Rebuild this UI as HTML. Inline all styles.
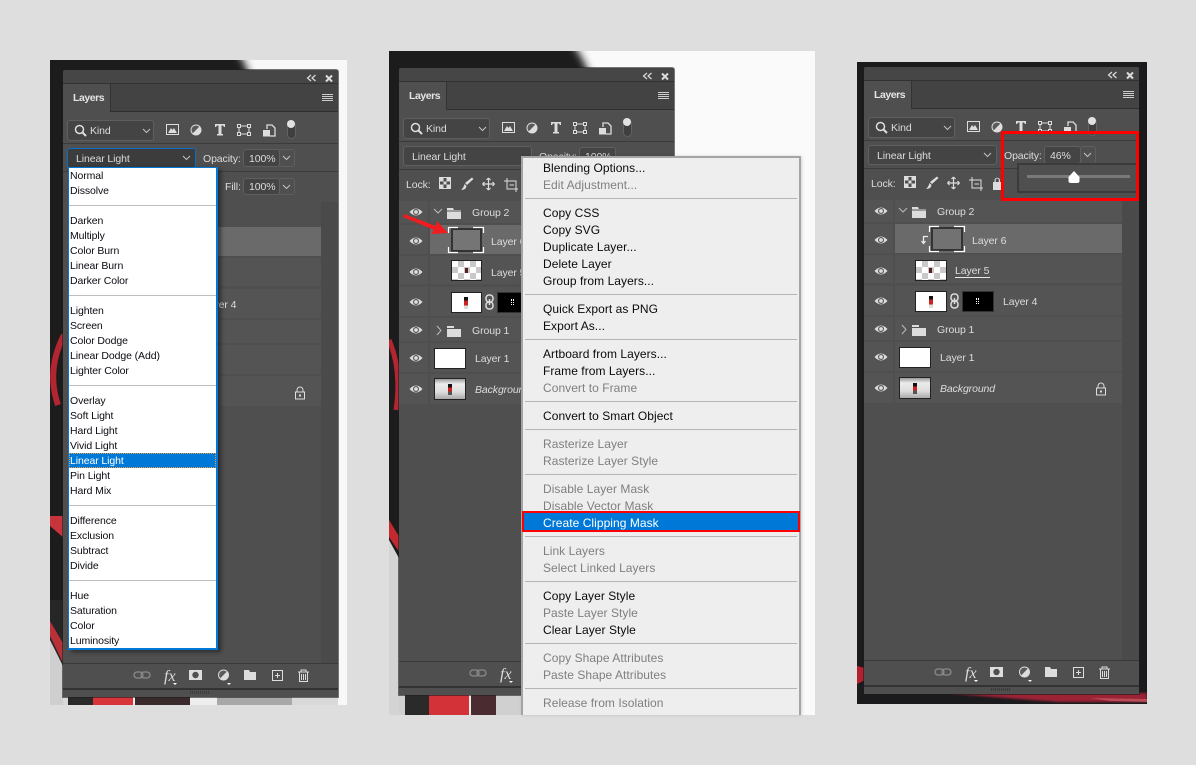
<!DOCTYPE html>
<html><head><meta charset="utf-8"><style>
html,body{margin:0;padding:0;width:1196px;height:765px;overflow:hidden;background:#dedede;font-family:"Liberation Sans",sans-serif}
.a,.t,.r,.s{position:absolute}
.p{position:absolute;width:275px;height:627px;background:#4f4f4f;border-radius:2px 2px 0 0;overflow:hidden;box-shadow:0 0 0 1px rgba(30,30,30,.6)}
.t{font-size:10.5px;line-height:14px;color:#dcdcdc;letter-spacing:-.1px;white-space:nowrap;margin-top:1px}
.r{left:31px;width:227px;background:#545454}
.e{position:absolute;left:0;width:29px;background:#545454}
.s{background:#444;border:1px solid #5f5f5f;box-sizing:border-box;border-radius:3px}
.m{position:absolute;left:2px;right:2px;height:1px;background:#b4b4b4}
.i{position:absolute;left:20px;font-size:12px;line-height:16px;letter-spacing:.05px;color:#0a0a0a;white-space:nowrap}
.g{color:#7f7f7f}
.d{position:absolute;left:1px;font-size:10.5px;line-height:14px;letter-spacing:-.1px;color:#0a0a12;white-space:nowrap}
.h{position:absolute;left:0;right:0;height:1px;background:#bdbdbd}
.l{font-weight:bold;color:#e4e4e4;letter-spacing:-.45px}
svg.a{overflow:visible}
</style></head><body>

<svg class="a" style="left:0;top:0" width="1196" height="765" viewBox="0 0 1196 765">
<defs><filter id="b"><feGaussianBlur stdDeviation="4"/></filter><filter id="b1"><feGaussianBlur stdDeviation="1"/></filter>
<clipPath id="c1"><rect x="50" y="60" width="297" height="645"/></clipPath>
<clipPath id="c2"><rect x="389" y="51" width="426" height="664"/></clipPath>
<clipPath id="c3"><rect x="857" y="62" width="290" height="642"/></clipPath>
<symbol id="eye" viewBox="0 0 14 10"><path d="M.5 5Q7-2 13.500 5Q7 12 .5 5Z" fill="#dcdcdc"/><circle cx="7" cy="5" r="3" fill="#545454"/><circle cx="7" cy="5" r="1.900" fill="#dcdcdc"/></symbol>
<symbol id="top" viewBox="0 0 30 10"><path d="M5 1L1.500 4 5 7M9.500 1L6 4 9.500 7" fill="none" stroke="#ddd" stroke-width="1.200"/><path d="M20 1.500L26 7.500M26 1.500L20 7.500" stroke="#ddd" stroke-width="2"/></symbol>
<symbol id="ham" viewBox="0 0 12 8"><path d="M0 .5H11M0 2.500H11M0 4.500H11M0 6.500H11" stroke="#ccc"/></symbol>
<symbol id="sr" viewBox="0 0 14 13"><circle cx="5.500" cy="5.500" r="4" fill="none" stroke="#ddd" stroke-width="1.500"/><path d="M8.500 8.500L12 12" stroke="#ddd" stroke-width="2"/></symbol>
<symbol id="ch" viewBox="0 0 10 6"><path d="M1 1L4.500 4.500 8 1" fill="none" stroke="#c4c4c4"/></symbol>
<symbol id="tools" viewBox="0 0 140 20"><path d="M3.500 4.500H15.500V14.500H3.500Z" fill="none" stroke="#ddd"/><path d="M5 13L8 8 9.500 10 11 8 14 13Z" fill="#ddd"/><circle cx="33" cy="10" r="5.500" fill="#ddd"/><path d="M29.800 13.200A4.500 4.500 0 0 1 36.200 6.800Z" fill="#5a5a5a"/><path d="M52 4H62V7H61L60 5.500H58.500V14H60V15.500H54V14H55.500V5.500H54L53 7H52Z" fill="#ddd"/><path d="M76 6H86V14H76Z" fill="none" stroke="#ddd"/><path d="M74.500 4.500h3v3h-3zM84.500 4.500h3v3h-3zM74.500 12.500h3v3h-3zM84.500 12.500h3v3h-3z" fill="#4f4f4f" stroke="#ddd"/><path d="M104 9V5H109L112 8V16H107" fill="none" stroke="#ddd" stroke-width="1.300"/><rect x="100" y="10" width="7" height="6.500" fill="#ddd"/></symbol>
<symbol id="locks" viewBox="0 0 110 20"><path d="M2.500 3.500H13.500V14.500H2.500Z" fill="#4f4f4f" stroke="#ddd"/><path d="M3 4h3.500v3.500H3zM9.500 4H13v3.500H9.500zM6.500 7.500h3v3h-3zM3 10.500h3.500V14H3zM9.500 10.500H13V14H9.500z" fill="#ddd"/><path d="M35 3.500L36.500 5 30 11 28 9ZM27.500 10L29.500 12Q29 16 24 16Q26.500 14 27.500 10Z" fill="#ddd"/><path d="M45.500 10H57.500M51.500 4V16M45.500 10l2-2M45.500 10l2 2M57.500 10l-2-2M57.500 10l-2 2M51.500 4l-2 2M51.500 4l2 2M51.500 16l-2-2M51.500 16l2-2" stroke="#ddd" stroke-width="1.200" fill="none"/><path d="M70 7H79V15H70Z" fill="none" stroke="#ddd"/><path d="M70 4V8M67 7H71M79 13V18M76 15H81M72.500 11H77" stroke="#ddd"/></symbol>
<symbol id="foot" viewBox="0 0 190 24"><g fill="none"><rect x="6" y="8" width="9" height="6" rx="3" stroke="#8a8a8a" stroke-width="1.300"/><rect x="13" y="8" width="9" height="6" rx="3" stroke="#8a8a8a" stroke-width="1.300"/></g><path d="M45 19h4l-2 2z" fill="#fff"/><rect x="61" y="6" width="13" height="10" fill="#ddd"/><circle cx="67.500" cy="11" r="3.200" fill="#4f4f4f"/><circle cx="95.500" cy="11" r="5.500" fill="#ddd"/><path d="M92.300 14.200A4.500 4.500 0 0 1 98.700 7.800Z" fill="#5a5a5a"/><path d="M99 19h4l-2 2z" fill="#fff"/><path d="M116 6H121L122 8H128V16H116Z" fill="#ddd"/><rect x="144.500" y="6.500" width="10" height="10" fill="none" stroke="#ddd"/><path d="M149.500 9V14M147 11.500H152" stroke="#ddd"/><path d="M170 8H181M173 8V6H178V8M171.500 8.500V17.500H179.500V8.500M173.500 10V16M175.500 10V16M177.500 10V16" fill="none" stroke="#ddd"/></symbol>
</defs>

<g clip-path="url(#c1)"><rect x="50" y="60" width="297" height="645" fill="#f8f8f8"/>
<path d="M40 50H236Q246 62 250 78V640H40Z" fill="#1c1c1c" filter="url(#b)"/>
<rect x="50" y="600" width="14" height="70" fill="#262626"/>
<path d="M64 335Q46 370 58 405" stroke="#b32530" stroke-width="6" fill="none"/>
<path d="M50 516H64V538L50 526Z" fill="#c8343c"/>
<path d="M50 621L64 645V665L50 636Z" fill="#b83038"/>
<path d="M50 640L64 668V705H50Z" fill="#cfcfcf"/>
<rect x="63" y="696" width="275" height="9" fill="#d9d9d9"/><rect x="68" y="696" width="25" height="9" fill="#2a2a2a"/>
<rect x="93" y="696" width="40" height="9" fill="#d8353a"/><rect x="133" y="696" width="2" height="9" fill="#eee"/>
<rect x="135" y="696" width="55" height="9" fill="#3a2a2c"/><rect x="190" y="696" width="27" height="9" fill="#eee"/>
<rect x="217" y="696" width="75" height="9" fill="#a8a8a8"/></g>

<g clip-path="url(#c2)"><rect x="389" y="51" width="426" height="664" fill="#fafafa"/>
<path d="M380 40H570Q582 55 590 75V660H380Z" fill="#1c1c1c" filter="url(#b)"/>
<path d="M389 340Q402 370 396 410" stroke="#b32530" stroke-width="5" fill="none"/>
<path d="M389 520L400 538V553L389 537Z" fill="#c22a30"/>
<path d="M389 540L400 560V715H389Z" fill="#d4d4d4"/>
<rect x="399" y="694" width="125" height="21" fill="#d0d0d0"/><rect x="405" y="694" width="24" height="21" fill="#2a2a2a"/>
<rect x="429" y="694" width="40" height="21" fill="#d33238"/><rect x="469" y="694" width="2" height="21" fill="#eee"/>
<rect x="471" y="694" width="25" height="21" fill="#4a2c30"/></g>

<g clip-path="url(#c3)"><rect x="857" y="62" width="290" height="642" fill="#1b1b1d"/>
<path d="M857 666L865 668V680L857 684Z" fill="#b5202f"/>
<path d="M945 693H1147V702H1060Q1000 698 945 693Z" fill="#9c2436" filter="url(#b1)"/></g>
<path d="M1090 698L1147 699V702L1110 701Z" fill="#c9606a" opacity=".7"/>
</svg>

<!-- ===== PANEL 1 ===== -->
<div class="p" style="left:63px;top:70px">
<div class="a" style="left:0;top:0;width:275px;height:13px;background:#464646"></div>
<div class="a" style="left:0;top:13px;width:275px;height:1px;background:#323232"></div>
<div class="a" style="left:0;top:14px;width:275px;height:27px;background:#434343;border-bottom:1px solid #2f2f2f"></div>
<div class="a" style="left:0;top:14px;width:48px;height:28px;background:#4f4f4f;border-right:1px solid #333;box-sizing:border-box"></div>
<div class="t l" style="left:10px;top:20px">Layers</div>
<svg class="a" style="left:243px;top:4px" width="30" height="10"><use href="#top"/></svg>
<svg class="a" style="left:259px;top:24px" width="12" height="8"><use href="#ham"/></svg>
<div class="a" style="left:0;top:73px;width:275px;height:1px;background:#3b3b3b"></div>
<div class="a" style="left:0;top:101px;width:275px;height:1px;background:#3b3b3b"></div>
<div class="s" style="left:4px;top:50px;width:87px;height:21px"></div>
<svg class="a" style="left:11px;top:54px" width="14" height="13"><use href="#sr"/></svg>
<div class="t" style="left:27px;top:53px">Kind</div>
<svg class="a" style="left:79px;top:58px" width="10" height="6"><use href="#ch"/></svg>
<svg class="a" style="left:100px;top:50px" width="140" height="20"><use href="#tools"/></svg>
<div class="a" style="left:224px;top:51px;width:9px;height:18px;border-radius:5px;background:#3f3f3f;border:1px solid #626262;box-sizing:border-box"></div>
<div class="a" style="left:224px;top:50px;width:8px;height:8px;border-radius:50%;background:#e2e2e2"></div>
<div class="s" style="left:4px;top:78px;width:129px;height:20px;background:#3c3c3c;border:1px solid #0c6fc6"></div>
<div class="t" style="left:13px;top:81px">Linear Light</div>
<svg class="a" style="left:119px;top:85px" width="10" height="6"><use href="#ch"/></svg>
<div class="t" style="left:140px;top:81px">Opacity:</div>
<div class="s" style="left:180px;top:79px;width:37px;height:18px"></div><div class="s" style="left:216px;top:79px;width:16px;height:18px;background:#4f4f4f"></div>
<div class="t" style="left:186px;top:81px">100%</div>
<svg class="a" style="left:219px;top:85px" width="10" height="6"><use href="#ch"/></svg>
<div class="t" style="left:162px;top:109px">Fill:</div>
<div class="s" style="left:180px;top:108px;width:37px;height:17px"></div><div class="s" style="left:216px;top:108px;width:16px;height:17px;background:#4f4f4f"></div>
<div class="t" style="left:186px;top:109px">100%</div>
<svg class="a" style="left:219px;top:114px" width="10" height="6"><use href="#ch"/></svg>
<div class="a" style="left:258px;top:132px;width:17px;height:461px;background:#4a4a4a"></div>
<div class="r" style="top:157px;height:29px;background:#6a6a6a"></div>
<div class="r" style="top:188px;height:28px"></div><div class="r" style="top:219px;height:29px"></div><div class="r" style="top:250px;height:23px"></div><div class="r" style="top:275px;height:29px"></div><div class="r" style="top:306px;height:30px"></div>
<div class="t" style="left:139px;top:227px">Layer 4</div>
<svg class="a" style="left:231px;top:316px" width="12" height="14"><path d="M3 6V4A3 3 0 0 1 9 4V6" fill="none" stroke="#ddd"/><rect x="1.500" y="6" width="9" height="7" fill="none" stroke="#ddd"/><rect x="5" y="8.500" width="2" height="2" fill="#ddd"/></svg>
<div class="a" style="left:0;top:593px;width:275px;height:1px;background:#3a3a3a"></div>
<div class="a" style="left:0;top:618px;width:275px;height:2px;background:#333"></div>
<div class="a" style="left:127px;top:621px;width:20px;height:3px;background:repeating-linear-gradient(90deg,#3c3c3c 0 1px,transparent 1px 2px)"></div>
<svg class="a" style="left:65px;top:594px" width="190" height="24"><use href="#foot"/><text x="36" y="17" font-family="Liberation Serif" font-style="italic" font-size="16" fill="#ddd">fx</text></svg>
</div>

<!-- dropdown -->
<div class="a" style="left:68px;top:167px;width:150px;height:483px;background:#fff;border:1px solid #0078d7;border-width:1px 2px 2px 1px;box-sizing:border-box;box-shadow:3px 2px 4px rgba(0,0,0,.45)">
<div class="d" style="top:1px">Normal</div><div class="d" style="top:16px">Dissolve</div><div class="h" style="top:37px"></div>
<div class="d" style="top:46px">Darken</div><div class="d" style="top:61px">Multiply</div><div class="d" style="top:76px">Color Burn</div><div class="d" style="top:91px">Linear Burn</div><div class="d" style="top:106px">Darker Color</div><div class="h" style="top:127px"></div>
<div class="d" style="top:136px">Lighten</div><div class="d" style="top:151px">Screen</div><div class="d" style="top:166px">Color Dodge</div><div class="d" style="top:181px">Linear Dodge (Add)</div><div class="d" style="top:196px">Lighter Color</div><div class="h" style="top:217px"></div>
<div class="d" style="top:226px">Overlay</div><div class="d" style="top:241px">Soft Light</div><div class="d" style="top:256px">Hard Light</div><div class="d" style="top:271px">Vivid Light</div>
<div class="a" style="left:0;right:0;top:285px;height:15px;background:#0078d7;outline:1px dotted #e8a040;outline-offset:-1px"></div><div class="d" style="top:286px;color:#fff">Linear Light</div>
<div class="d" style="top:301px">Pin Light</div><div class="d" style="top:316px">Hard Mix</div><div class="h" style="top:337px"></div>
<div class="d" style="top:346px">Difference</div><div class="d" style="top:361px">Exclusion</div><div class="d" style="top:376px">Subtract</div><div class="d" style="top:391px">Divide</div><div class="h" style="top:412px"></div>
<div class="d" style="top:421px">Hue</div><div class="d" style="top:436px">Saturation</div><div class="d" style="top:451px">Color</div><div class="d" style="top:466px">Luminosity</div>
</div>

<!-- ===== PANEL 2 ===== -->
<div class="p" style="left:399px;top:68px">
<div class="a" style="left:0;top:0;width:275px;height:13px;background:#464646"></div>
<div class="a" style="left:0;top:13px;width:275px;height:1px;background:#323232"></div>
<div class="a" style="left:0;top:14px;width:275px;height:27px;background:#434343;border-bottom:1px solid #2f2f2f"></div>
<div class="a" style="left:0;top:14px;width:48px;height:28px;background:#4f4f4f;border-right:1px solid #333;box-sizing:border-box"></div>
<div class="t l" style="left:10px;top:20px">Layers</div>
<svg class="a" style="left:243px;top:4px" width="30" height="10"><use href="#top"/></svg>
<svg class="a" style="left:259px;top:24px" width="12" height="8"><use href="#ham"/></svg>
<div class="a" style="left:0;top:73px;width:275px;height:1px;background:#3b3b3b"></div>
<div class="a" style="left:0;top:101px;width:275px;height:1px;background:#3b3b3b"></div>
<div class="s" style="left:4px;top:50px;width:87px;height:21px"></div>
<svg class="a" style="left:11px;top:54px" width="14" height="13"><use href="#sr"/></svg>
<div class="t" style="left:27px;top:53px">Kind</div>
<svg class="a" style="left:79px;top:58px" width="10" height="6"><use href="#ch"/></svg>
<svg class="a" style="left:100px;top:50px" width="140" height="20"><use href="#tools"/></svg>
<div class="a" style="left:224px;top:51px;width:9px;height:18px;border-radius:5px;background:#3f3f3f;border:1px solid #626262;box-sizing:border-box"></div>
<div class="a" style="left:224px;top:50px;width:8px;height:8px;border-radius:50%;background:#e2e2e2"></div>
<div class="s" style="left:4px;top:78px;width:129px;height:20px"></div>
<div class="t" style="left:13px;top:81px">Linear Light</div>
<div class="t" style="left:140px;top:81px">Opacity:</div>
<div class="s" style="left:180px;top:79px;width:37px;height:18px"></div>
<div class="t" style="left:186px;top:81px">100%</div>
<div class="t" style="left:7px;top:109px">Lock:</div>
<svg class="a" style="left:38px;top:106px" width="110" height="20"><use href="#locks"/></svg>
<div class="e" style="top:133px;height:22px"></div><div class="r" style="top:133px;height:22px"></div>
<div class="e" style="top:157px;height:29px"></div><div class="r" style="top:157px;height:29px;background:#6a6a6a"></div>
<div class="e" style="top:188px;height:28px"></div><div class="r" style="top:188px;height:28px"></div>
<div class="e" style="top:219px;height:29px"></div><div class="r" style="top:219px;height:29px"></div>
<div class="e" style="top:250px;height:23px"></div><div class="r" style="top:250px;height:23px"></div>
<div class="e" style="top:275px;height:29px"></div><div class="r" style="top:275px;height:29px"></div>
<div class="e" style="top:306px;height:30px"></div><div class="r" style="top:306px;height:30px"></div>
<svg class="a" style="left:10px;top:139px" width="14" height="10"><use href="#eye"/></svg><svg class="a" style="left:10px;top:168px" width="14" height="10"><use href="#eye"/></svg><svg class="a" style="left:10px;top:199px" width="14" height="10"><use href="#eye"/></svg><svg class="a" style="left:10px;top:229px" width="14" height="10"><use href="#eye"/></svg><svg class="a" style="left:10px;top:257px" width="14" height="10"><use href="#eye"/></svg><svg class="a" style="left:10px;top:285px" width="14" height="10"><use href="#eye"/></svg><svg class="a" style="left:10px;top:316px" width="14" height="10"><use href="#eye"/></svg>
<svg class="a" style="left:34px;top:137px" width="50" height="16"><path d="M1 4L5 8 9 4" fill="none" stroke="#bbb"/><path d="M14 3H20L21 5H28V14H14Z" fill="#dcdcdc"/><path d="M14 6H28" stroke="#545454"/></svg>
<div class="t" style="left:73px;top:137px">Group 2</div>
<div class="a" style="left:52px;top:160px;width:31px;height:24px;background:#757575;border:2px solid #333;box-sizing:border-box"></div>
<svg class="a" style="left:49px;top:159px" width="38" height="27"><path d="M.5 6V.5H10M25 .5H35.500V6M35.500 20V25.500H25M10 25.500H.5V20" fill="none" stroke="#fff" stroke-width="1.200"/></svg>
<div class="t" style="left:92px;top:166px">Layer 6</div>
<div class="a" style="left:52px;top:192px;width:31px;height:21px;border:1px solid #222;box-sizing:border-box;background:repeating-conic-gradient(#c9c9c9 0 25%,#fff 0 50%) 0 0/12px 12px"></div>
<div class="a" style="left:66px;top:200px;width:3px;height:5px;background:#5a2025"></div>
<div class="t" style="left:92px;top:197px">Layer 5</div>
<div class="a" style="left:52px;top:224px;width:31px;height:21px;background:#fff;border:1px solid #222;box-sizing:border-box"></div><div class="a" style="left:65px;top:229px;width:4px;height:12px;background:linear-gradient(#111 30%,#c22 30% 70%,#ddd 70%)"></div>
<svg class="a" style="left:85px;top:226px" width="11" height="16"><rect x="2" y="1" width="7" height="7" rx="3" fill="none" stroke="#ddd" stroke-width="1.500"/><rect x="2" y="8" width="7" height="7" rx="3" fill="none" stroke="#ddd" stroke-width="1.500"/><path d="M5.500 5V11" stroke="#ddd" stroke-width="1.500"/></svg>
<div class="a" style="left:98px;top:224px;width:32px;height:21px;background:#000;border:1px solid #333;box-sizing:border-box"></div><div class="a" style="left:112px;top:231px;width:3px;height:6px;border:1px dotted #fff;box-sizing:border-box"></div>
<svg class="a" style="left:34px;top:255px" width="50" height="16"><path d="M4 3L8 7.500 4 12" fill="none" stroke="#bbb"/><path d="M14 3H21V5H14ZM14 6H28V14H14Z" fill="#dcdcdc"/></svg>
<div class="t" style="left:73px;top:255px">Group 1</div>
<div class="a" style="left:35px;top:280px;width:32px;height:21px;background:#fff;border:1px solid #222;box-sizing:border-box"></div>
<div class="t" style="left:76px;top:283px">Layer 1</div>
<div class="a" style="left:35px;top:310px;width:32px;height:22px;background:linear-gradient(#999,#ececec 25%,#ddd 65%,#aaa);border:1px solid #222;box-sizing:border-box"></div><div class="a" style="left:49px;top:316px;width:4px;height:11px;background:linear-gradient(#111 30%,#c22 30% 70%,#555 70%)"></div>
<div class="t" style="left:76px;top:314px;font-style:italic">Background</div>
<div class="a" style="left:0;top:593px;width:275px;height:1px;background:#3a3a3a"></div>
<div class="a" style="left:0;top:618px;width:275px;height:2px;background:#333"></div>
<svg class="a" style="left:65px;top:594px" width="190" height="24"><use href="#foot"/><text x="36" y="17" font-family="Liberation Serif" font-style="italic" font-size="16" fill="#ddd">fx</text></svg>
</div>
<svg class="a" style="left:0;top:0" width="600" height="300"><path d="M404 214L436 226 437 221 448 233 431 234 434 230 403 217Z" fill="#f01c20"/></svg>

<!-- context menu -->
<div class="a" style="left:521px;top:156px;width:280px;height:559px;background:#eee;border:2px solid #a4a4a4;border-bottom:0;box-sizing:border-box;box-shadow:1px 0 3px rgba(0,0,0,.15)">
<div class="i" style="top:2px">Blending Options...</div><div class="i g" style="top:19px">Edit Adjustment...</div><div class="m" style="top:40px"></div>
<div class="i" style="top:47px">Copy CSS</div><div class="i" style="top:64px">Copy SVG</div><div class="i" style="top:81px">Duplicate Layer...</div><div class="i" style="top:98px">Delete Layer</div><div class="i" style="top:115px">Group from Layers...</div><div class="m" style="top:136px"></div>
<div class="i" style="top:143px">Quick Export as PNG</div><div class="i" style="top:160px">Export As...</div><div class="m" style="top:181px"></div>
<div class="i" style="top:188px">Artboard from Layers...</div><div class="i" style="top:205px">Frame from Layers...</div><div class="i g" style="top:222px">Convert to Frame</div><div class="m" style="top:243px"></div>
<div class="i" style="top:250px">Convert to Smart Object</div><div class="m" style="top:271px"></div>
<div class="i g" style="top:278px">Rasterize Layer</div><div class="i g" style="top:295px">Rasterize Layer Style</div><div class="m" style="top:316px"></div>
<div class="i g" style="top:323px">Disable Layer Mask</div><div class="i g" style="top:340px">Disable Vector Mask</div>
<div class="a" style="left:-1px;top:353px;width:278px;height:21px;background:#0078d7;border:2px solid #f00;box-sizing:border-box"></div><div class="i" style="top:357px;color:#fff">Create Clipping Mask</div>
<div class="m" style="top:378px"></div>
<div class="i g" style="top:385px">Link Layers</div><div class="i g" style="top:402px">Select Linked Layers</div><div class="m" style="top:423px"></div>
<div class="i" style="top:430px">Copy Layer Style</div><div class="i g" style="top:447px">Paste Layer Style</div><div class="i" style="top:464px">Clear Layer Style</div><div class="m" style="top:485px"></div>
<div class="i g" style="top:492px">Copy Shape Attributes</div><div class="i g" style="top:509px">Paste Shape Attributes</div><div class="m" style="top:530px"></div>
<div class="i g" style="top:537px">Release from Isolation</div>
</div>

<!-- ===== PANEL 3 ===== -->
<div class="p" style="left:864px;top:67px">
<div class="a" style="left:0;top:0;width:275px;height:13px;background:#464646"></div>
<div class="a" style="left:0;top:13px;width:275px;height:1px;background:#323232"></div>
<div class="a" style="left:0;top:14px;width:275px;height:27px;background:#434343;border-bottom:1px solid #2f2f2f"></div>
<div class="a" style="left:0;top:14px;width:48px;height:28px;background:#4f4f4f;border-right:1px solid #333;box-sizing:border-box"></div>
<div class="t l" style="left:10px;top:20px">Layers</div>
<svg class="a" style="left:243px;top:4px" width="30" height="10"><use href="#top"/></svg>
<svg class="a" style="left:259px;top:24px" width="12" height="8"><use href="#ham"/></svg>
<div class="a" style="left:0;top:73px;width:275px;height:1px;background:#3b3b3b"></div>
<div class="a" style="left:0;top:101px;width:275px;height:1px;background:#3b3b3b"></div>
<div class="s" style="left:4px;top:50px;width:87px;height:21px"></div>
<svg class="a" style="left:11px;top:54px" width="14" height="13"><use href="#sr"/></svg>
<div class="t" style="left:27px;top:53px">Kind</div>
<svg class="a" style="left:79px;top:58px" width="10" height="6"><use href="#ch"/></svg>
<svg class="a" style="left:100px;top:50px" width="140" height="20"><use href="#tools"/></svg>
<div class="a" style="left:224px;top:51px;width:9px;height:18px;border-radius:5px;background:#3f3f3f;border:1px solid #626262;box-sizing:border-box"></div>
<div class="a" style="left:224px;top:50px;width:8px;height:8px;border-radius:50%;background:#e2e2e2"></div>
<div class="s" style="left:4px;top:78px;width:129px;height:20px"></div>
<div class="t" style="left:13px;top:81px">Linear Light</div>
<svg class="a" style="left:119px;top:85px" width="10" height="6"><use href="#ch"/></svg>
<div class="t" style="left:140px;top:81px">Opacity:</div>
<div class="s" style="left:180px;top:79px;width:37px;height:18px"></div><div class="s" style="left:216px;top:79px;width:16px;height:18px;background:#4f4f4f"></div>
<div class="t" style="left:186px;top:81px">46%</div>
<svg class="a" style="left:219px;top:85px" width="10" height="6"><use href="#ch"/></svg>
<div class="t" style="left:7px;top:109px">Lock:</div>
<svg class="a" style="left:38px;top:106px" width="110" height="20"><use href="#locks"/><path d="M91 9H99.500V17H91ZM92.500 9V7A2.800 2.800 0 0 1 98 7V9H96.800V7A1.500 1.500 0 0 0 93.700 7V9Z" fill="#ddd"/></svg>
<div class="a" style="left:258px;top:132px;width:17px;height:461px;background:#4a4a4a"></div>
<div class="e" style="top:133px;height:22px"></div><div class="r" style="top:133px;height:22px"></div>
<div class="e" style="top:157px;height:29px"></div><div class="r" style="top:157px;height:29px;background:#6a6a6a"></div>
<div class="e" style="top:188px;height:28px"></div><div class="r" style="top:188px;height:28px"></div>
<div class="e" style="top:219px;height:29px"></div><div class="r" style="top:219px;height:29px"></div>
<div class="e" style="top:250px;height:23px"></div><div class="r" style="top:250px;height:23px"></div>
<div class="e" style="top:275px;height:29px"></div><div class="r" style="top:275px;height:29px"></div>
<div class="e" style="top:306px;height:30px"></div><div class="r" style="top:306px;height:30px"></div>
<svg class="a" style="left:10px;top:139px" width="14" height="10"><use href="#eye"/></svg><svg class="a" style="left:10px;top:168px" width="14" height="10"><use href="#eye"/></svg><svg class="a" style="left:10px;top:199px" width="14" height="10"><use href="#eye"/></svg><svg class="a" style="left:10px;top:229px" width="14" height="10"><use href="#eye"/></svg><svg class="a" style="left:10px;top:257px" width="14" height="10"><use href="#eye"/></svg><svg class="a" style="left:10px;top:285px" width="14" height="10"><use href="#eye"/></svg><svg class="a" style="left:10px;top:316px" width="14" height="10"><use href="#eye"/></svg>
<svg class="a" style="left:34px;top:137px" width="50" height="16"><path d="M1 4L5 8 9 4" fill="none" stroke="#bbb"/><path d="M14 3H20L21 5H28V14H14Z" fill="#dcdcdc"/><path d="M14 6H28" stroke="#545454"/></svg>
<div class="t" style="left:73px;top:137px">Group 2</div>
<svg class="a" style="left:57px;top:167px" width="8" height="11"><path d="M7 2.500H2.500V9M.5 7L2.500 9.500 4.500 7" fill="none" stroke="#eee" stroke-width="1.200"/></svg>
<div class="a" style="left:67px;top:160px;width:32px;height:24px;background:#727272;border:2px solid #333;box-sizing:border-box"></div>
<svg class="a" style="left:65px;top:159px" width="38" height="27"><path d="M.5 6V.5H10M25 .5H35.500V6M35.500 20V25.500H25M10 25.500H.5V20" fill="none" stroke="#fff" stroke-width="1.200"/></svg>
<div class="t" style="left:108px;top:166px">Layer 6</div>
<div class="a" style="left:51px;top:193px;width:32px;height:21px;border:1px solid #222;box-sizing:border-box;background:repeating-conic-gradient(#c9c9c9 0 25%,#fff 0 50%) 0 0/12px 12px"></div>
<div class="a" style="left:65px;top:201px;width:3px;height:5px;background:#5a2025"></div>
<div class="t" style="left:91px;top:197px;border-bottom:1px solid #e8e8e8;line-height:12px;padding-right:1px">Layer 5</div>
<div class="a" style="left:51px;top:224px;width:32px;height:21px;background:#fff;border:1px solid #222;box-sizing:border-box"></div><div class="a" style="left:65px;top:229px;width:4px;height:12px;background:linear-gradient(#111 30%,#c22 30% 70%,#ddd 70%)"></div>
<svg class="a" style="left:85px;top:226px" width="11" height="16"><rect x="2" y="1" width="7" height="7" rx="3" fill="none" stroke="#ddd" stroke-width="1.500"/><rect x="2" y="8" width="7" height="7" rx="3" fill="none" stroke="#ddd" stroke-width="1.500"/><path d="M5.500 5V11" stroke="#ddd" stroke-width="1.500"/></svg>
<div class="a" style="left:98px;top:224px;width:32px;height:21px;background:#000;border:1px solid #333;box-sizing:border-box"></div><div class="a" style="left:112px;top:231px;width:3px;height:6px;border:1px dotted #fff;box-sizing:border-box"></div>
<div class="t" style="left:139px;top:227px">Layer 4</div>
<svg class="a" style="left:34px;top:255px" width="50" height="16"><path d="M4 3L8 7.500 4 12" fill="none" stroke="#bbb"/><path d="M14 3H21V5H14ZM14 6H28V14H14Z" fill="#dcdcdc"/></svg>
<div class="t" style="left:73px;top:255px">Group 1</div>
<div class="a" style="left:35px;top:280px;width:32px;height:21px;background:#fff;border:1px solid #222;box-sizing:border-box"></div>
<div class="t" style="left:76px;top:283px">Layer 1</div>
<div class="a" style="left:35px;top:310px;width:32px;height:22px;background:linear-gradient(#999,#ececec 25%,#ddd 65%,#aaa);border:1px solid #222;box-sizing:border-box"></div><div class="a" style="left:49px;top:316px;width:4px;height:11px;background:linear-gradient(#111 30%,#c22 30% 70%,#555 70%)"></div>
<div class="t" style="left:76px;top:314px;font-style:italic">Background</div>
<svg class="a" style="left:231px;top:315px" width="12" height="14"><path d="M3 6V4A3 3 0 0 1 9 4V6" fill="none" stroke="#ddd"/><rect x="1.500" y="6" width="9" height="7" fill="none" stroke="#ddd"/><rect x="5" y="8.500" width="2" height="2" fill="#ddd"/></svg>
<div class="a" style="left:0;top:593px;width:275px;height:1px;background:#3a3a3a"></div>
<div class="a" style="left:0;top:618px;width:275px;height:2px;background:#333"></div>
<div class="a" style="left:127px;top:621px;width:20px;height:3px;background:repeating-linear-gradient(90deg,#3c3c3c 0 1px,transparent 1px 2px)"></div>
<svg class="a" style="left:65px;top:594px" width="190" height="24"><use href="#foot"/><text x="36" y="17" font-family="Liberation Serif" font-style="italic" font-size="16" fill="#ddd">fx</text></svg>
</div>
<!-- slider popup -->
<div class="a" style="left:1017px;top:163px;width:122px;height:30px;background:#4f4f4f;border:2px solid #3b3b3b;box-sizing:border-box"></div>
<div class="a" style="left:1027px;top:175px;width:103px;height:3px;background:#7a7a7a"></div>
<svg class="a" style="left:1067px;top:170px" width="14" height="14"><path d="M7 1L12.500 7V11Q12.500 13 10 13H4Q1.500 13 1.500 11V7Z" fill="#fff"/></svg>
<div class="a" style="left:1001px;top:131px;width:138px;height:70px;border:3px solid #f00;box-sizing:border-box"></div>

</body></html>
